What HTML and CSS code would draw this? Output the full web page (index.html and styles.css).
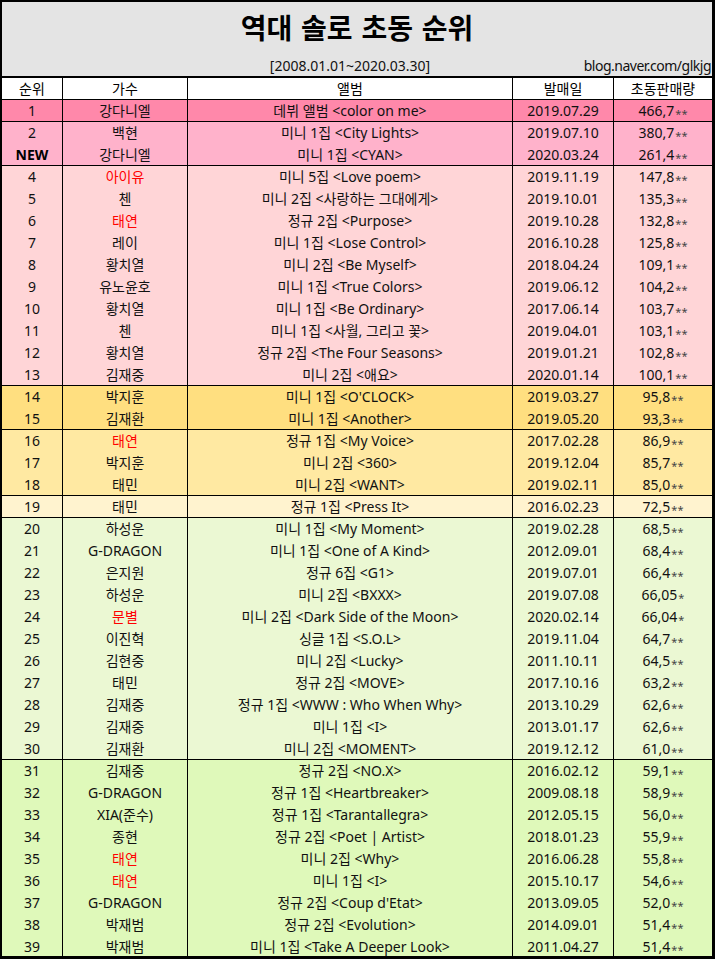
FILE: index.html
```html
<!DOCTYPE html>
<html lang="ko">
<head>
<meta charset="utf-8">
<title>역대 솔로 초동 순위</title>
<link rel="stylesheet" href="styles.css">
</head>
<body>
<div class="sheet">
  <header class="banner">
    <h1 class="title">역대 솔로 초동 순위</h1>
    <div class="meta">
      <span class="period">[2008.01.01~2020.03.30]</span>
      <span class="source">blog.naver.com/glkjg</span>
    </div>
  </header>

  <div class="row head">
    <div class="cell">순위</div><div class="cell">가수</div><div class="cell">앨범</div><div class="cell">발매일</div><div class="cell">초동판매량</div>
  </div>

  <div class="row c1 end"><div class="cell">1</div><div class="cell">강다니엘</div><div class="cell">데뷔 앨범 &lt;color on me&gt;</div><div class="cell">2019.07.29</div><div class="cell">466,7<span class="mask">**</span></div></div>

  <div class="row c2"><div class="cell">2</div><div class="cell">백현</div><div class="cell">미니 1집 &lt;City Lights&gt;</div><div class="cell">2019.07.10</div><div class="cell">380,7<span class="mask">**</span></div></div>
  <div class="row c2 end"><div class="cell new">NEW</div><div class="cell">강다니엘</div><div class="cell">미니 1집 &lt;CYAN&gt;</div><div class="cell">2020.03.24</div><div class="cell">261,4<span class="mask">**</span></div></div>

  <div class="row c3"><div class="cell">4</div><div class="cell red">아이유</div><div class="cell">미니 5집 &lt;Love poem&gt;</div><div class="cell">2019.11.19</div><div class="cell">147,8<span class="mask">**</span></div></div>
  <div class="row c3"><div class="cell">5</div><div class="cell">첸</div><div class="cell">미니 2집 &lt;사랑하는 그대에게&gt;</div><div class="cell">2019.10.01</div><div class="cell">135,3<span class="mask">**</span></div></div>
  <div class="row c3"><div class="cell">6</div><div class="cell red">태연</div><div class="cell">정규 2집 &lt;Purpose&gt;</div><div class="cell">2019.10.28</div><div class="cell">132,8<span class="mask">**</span></div></div>
  <div class="row c3"><div class="cell">7</div><div class="cell">레이</div><div class="cell">미니 1집 &lt;Lose Control&gt;</div><div class="cell">2016.10.28</div><div class="cell">125,8<span class="mask">**</span></div></div>
  <div class="row c3"><div class="cell">8</div><div class="cell">황치열</div><div class="cell">미니 2집 &lt;Be Myself&gt;</div><div class="cell">2018.04.24</div><div class="cell">109,1<span class="mask">**</span></div></div>
  <div class="row c3"><div class="cell">9</div><div class="cell">유노윤호</div><div class="cell">미니 1집 &lt;True Colors&gt;</div><div class="cell">2019.06.12</div><div class="cell">104,2<span class="mask">**</span></div></div>
  <div class="row c3"><div class="cell">10</div><div class="cell">황치열</div><div class="cell">미니 1집 &lt;Be Ordinary&gt;</div><div class="cell">2017.06.14</div><div class="cell">103,7<span class="mask">**</span></div></div>
  <div class="row c3"><div class="cell">11</div><div class="cell">첸</div><div class="cell">미니 1집 &lt;사월, 그리고 꽃&gt;</div><div class="cell">2019.04.01</div><div class="cell">103,1<span class="mask">**</span></div></div>
  <div class="row c3"><div class="cell">12</div><div class="cell">황치열</div><div class="cell">정규 2집 &lt;The Four Seasons&gt;</div><div class="cell">2019.01.21</div><div class="cell">102,8<span class="mask">**</span></div></div>
  <div class="row c3 end"><div class="cell">13</div><div class="cell">김재중</div><div class="cell">미니 2집 &lt;애요&gt;</div><div class="cell">2020.01.14</div><div class="cell">100,1<span class="mask">**</span></div></div>

  <div class="row c4"><div class="cell">14</div><div class="cell">박지훈</div><div class="cell">미니 1집 &lt;O'CLOCK&gt;</div><div class="cell">2019.03.27</div><div class="cell">95,8<span class="mask">**</span></div></div>
  <div class="row c4 end"><div class="cell">15</div><div class="cell">김재환</div><div class="cell">미니 1집 &lt;Another&gt;</div><div class="cell">2019.05.20</div><div class="cell">93,3<span class="mask">**</span></div></div>

  <div class="row c5"><div class="cell">16</div><div class="cell red">태연</div><div class="cell">정규 1집 &lt;My Voice&gt;</div><div class="cell">2017.02.28</div><div class="cell">86,9<span class="mask">**</span></div></div>
  <div class="row c5"><div class="cell">17</div><div class="cell">박지훈</div><div class="cell">미니 2집 &lt;360&gt;</div><div class="cell">2019.12.04</div><div class="cell">85,7<span class="mask">**</span></div></div>
  <div class="row c5 end"><div class="cell">18</div><div class="cell">태민</div><div class="cell">미니 2집 &lt;WANT&gt;</div><div class="cell">2019.02.11</div><div class="cell">85,0<span class="mask">**</span></div></div>

  <div class="row c6 end"><div class="cell">19</div><div class="cell">태민</div><div class="cell">정규 1집 &lt;Press It&gt;</div><div class="cell">2016.02.23</div><div class="cell">72,5<span class="mask">**</span></div></div>

  <div class="row c7"><div class="cell">20</div><div class="cell">하성운</div><div class="cell">미니 1집 &lt;My Moment&gt;</div><div class="cell">2019.02.28</div><div class="cell">68,5<span class="mask">**</span></div></div>
  <div class="row c7"><div class="cell">21</div><div class="cell">G-DRAGON</div><div class="cell">미니 1집 &lt;One of A Kind&gt;</div><div class="cell">2012.09.01</div><div class="cell">68,4<span class="mask">**</span></div></div>
  <div class="row c7"><div class="cell">22</div><div class="cell">은지원</div><div class="cell">정규 6집 &lt;G1&gt;</div><div class="cell">2019.07.01</div><div class="cell">66,4<span class="mask">**</span></div></div>
  <div class="row c7"><div class="cell">23</div><div class="cell">하성운</div><div class="cell">미니 2집 &lt;BXXX&gt;</div><div class="cell">2019.07.08</div><div class="cell">66,05<span class="mask">*</span></div></div>
  <div class="row c7"><div class="cell">24</div><div class="cell red">문별</div><div class="cell">미니 2집 &lt;Dark Side of the Moon&gt;</div><div class="cell">2020.02.14</div><div class="cell">66,04<span class="mask">*</span></div></div>
  <div class="row c7"><div class="cell">25</div><div class="cell">이진혁</div><div class="cell">싱글 1집 &lt;S.O.L&gt;</div><div class="cell">2019.11.04</div><div class="cell">64,7<span class="mask">**</span></div></div>
  <div class="row c7"><div class="cell">26</div><div class="cell">김현중</div><div class="cell">미니 2집 &lt;Lucky&gt;</div><div class="cell">2011.10.11</div><div class="cell">64,5<span class="mask">**</span></div></div>
  <div class="row c7"><div class="cell">27</div><div class="cell">태민</div><div class="cell">정규 2집 &lt;MOVE&gt;</div><div class="cell">2017.10.16</div><div class="cell">63,2<span class="mask">**</span></div></div>
  <div class="row c7"><div class="cell">28</div><div class="cell">김재중</div><div class="cell">정규 1집 &lt;WWW : Who When Why&gt;</div><div class="cell">2013.10.29</div><div class="cell">62,6<span class="mask">**</span></div></div>
  <div class="row c7"><div class="cell">29</div><div class="cell">김재중</div><div class="cell">미니 1집 &lt;I&gt;</div><div class="cell">2013.01.17</div><div class="cell">62,6<span class="mask">**</span></div></div>
  <div class="row c7 end"><div class="cell">30</div><div class="cell">김재환</div><div class="cell">미니 2집 &lt;MOMENT&gt;</div><div class="cell">2019.12.12</div><div class="cell">61,0<span class="mask">**</span></div></div>

  <div class="row c8"><div class="cell">31</div><div class="cell">김재중</div><div class="cell">정규 2집 &lt;NO.X&gt;</div><div class="cell">2016.02.12</div><div class="cell">59,1<span class="mask">**</span></div></div>
  <div class="row c8"><div class="cell">32</div><div class="cell">G-DRAGON</div><div class="cell">정규 1집 &lt;Heartbreaker&gt;</div><div class="cell">2009.08.18</div><div class="cell">58,9<span class="mask">**</span></div></div>
  <div class="row c8"><div class="cell">33</div><div class="cell">XIA(준수)</div><div class="cell">정규 1집 &lt;Tarantallegra&gt;</div><div class="cell">2012.05.15</div><div class="cell">56,0<span class="mask">**</span></div></div>
  <div class="row c8"><div class="cell">34</div><div class="cell">종현</div><div class="cell">정규 2집 &lt;Poet | Artist&gt;</div><div class="cell">2018.01.23</div><div class="cell">55,9<span class="mask">**</span></div></div>
  <div class="row c8"><div class="cell">35</div><div class="cell red">태연</div><div class="cell">미니 2집 &lt;Why&gt;</div><div class="cell">2016.06.28</div><div class="cell">55,8<span class="mask">**</span></div></div>
  <div class="row c8"><div class="cell">36</div><div class="cell red">태연</div><div class="cell">미니 1집 &lt;I&gt;</div><div class="cell">2015.10.17</div><div class="cell">54,6<span class="mask">**</span></div></div>
  <div class="row c8"><div class="cell">37</div><div class="cell">G-DRAGON</div><div class="cell">정규 2집 &lt;Coup d'Etat&gt;</div><div class="cell">2013.09.05</div><div class="cell">52,0<span class="mask">**</span></div></div>
  <div class="row c8"><div class="cell">38</div><div class="cell">박재범</div><div class="cell">정규 2집 &lt;Evolution&gt;</div><div class="cell">2014.09.01</div><div class="cell">51,4<span class="mask">**</span></div></div>
  <div class="row c8"><div class="cell">39</div><div class="cell">박재범</div><div class="cell">미니 1집 &lt;Take A Deeper Look&gt;</div><div class="cell">2011.04.27</div><div class="cell">51,4<span class="mask">**</span></div></div>
</div>
</body>
</html>
```

FILE: styles.css
```css
* { box-sizing: border-box; }
html, body { margin: 0; padding: 0; background: #fff; }
body {
  font-family: "Noto Sans", "Noto Sans CJK KR", sans-serif;
  font-size: 14px;
  color: #111;
}
.sheet {
  width: 715px;
  height: 959px;
  border-style: solid;
  border-color: #000;
  border-width: 2px 3px 3px 2px;
  overflow: hidden;
}
.banner {
  height: 74px;
  background: #e4e4e4;
  padding-top: 5px;
}
.title {
  margin: 0;
  height: 40px;
  line-height: 40px;
  text-align: center;
  font-family: "Noto Sans CJK KR", sans-serif;
  font-size: 28px;
  font-weight: 700;
  word-spacing: 1px;
  color: #000;
}
.meta {
  margin-top: 9px;
  height: 20px;
  line-height: 20px;
  display: grid;
  grid-template-columns: 1fr auto 1fr;
  color: #111;
}
.period { grid-column: 2; margin-right: 14px; }
.source { grid-column: 3; justify-self: end; padding-right: 1px; letter-spacing: -0.5px; }
.row {
  display: grid;
  grid-template-columns: 61px 125px 325px 101px 98px;
  height: 22px;
}
.row.end { border-bottom: 1px solid #000; }
.row.head {
  height: 24px;
  background: #fff;
  border-top: 2px solid #000;
  border-bottom: 1px solid #000;
  color: #000;
}
.cell {
  border-right: 1px solid #000;
  text-align: center;
  line-height: 21px;
  white-space: nowrap;
  overflow: hidden;
}
.cell:last-child { border-right: none; }
.new { font-weight: 700; color: #000; }
.red { color: #ff0000; }
.mask {
  font-size: 11px;
  color: #444;
  position: relative;
  top: 2px;
  margin-left: 1px;
}
.c1 { background: #ff88aa; }
.c2 { background: #ffb2cb; }
.c3 { background: #ffd5d7; }
.c4 { background: #ffdf80; }
.c5 { background: #ffe9a2; }
.c6 { background: #fff3cf; }
.c7 { background: #ebf8d3; }
.c8 { background: #dff9ba; }
```
